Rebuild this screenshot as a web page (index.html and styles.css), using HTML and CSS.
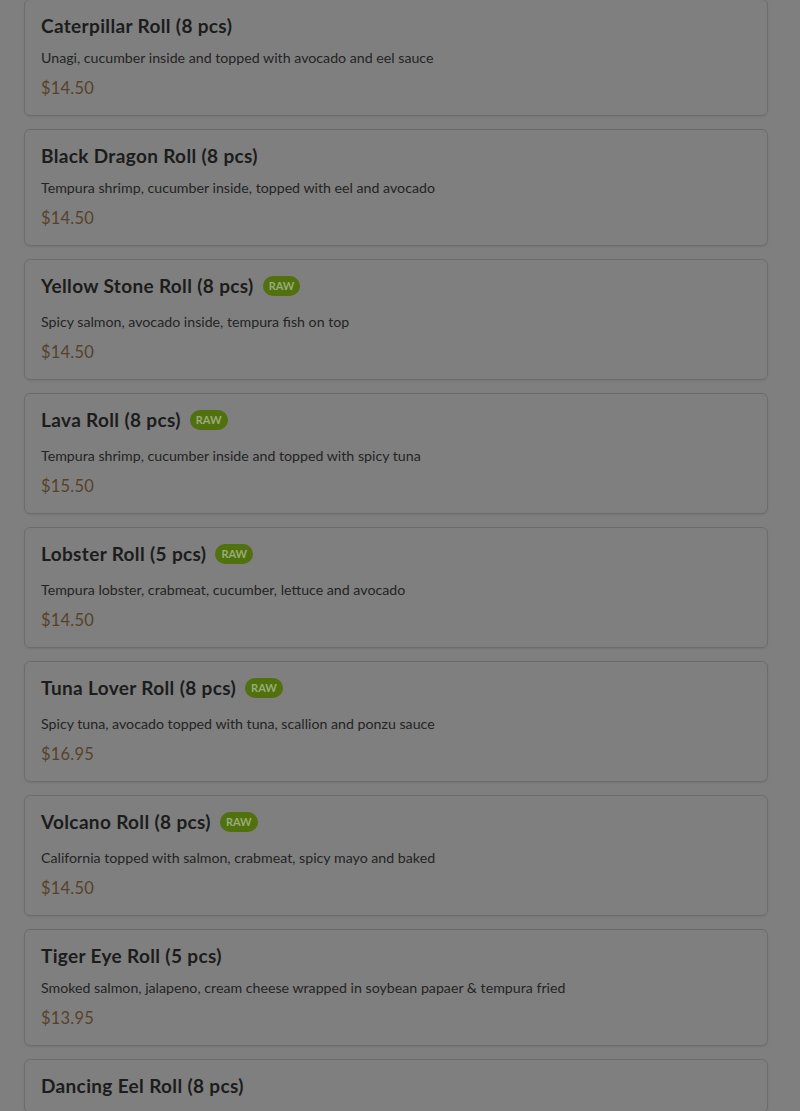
FILE: index.html
```html
<!DOCTYPE html>
<html>
<head>
<meta charset="utf-8">
<link rel="stylesheet" href="styles.css">
</head>
<body>
<div class="menu">
  <div class="card">
    <div class="title-row"><h3 class="title">Caterpillar Roll (8 pcs)</h3></div>
    <p class="desc">Unagi, cucumber inside and topped with avocado and eel sauce</p>
    <div class="price">$14.50</div>
  </div>
  <div class="card">
    <div class="title-row"><h3 class="title">Black Dragon Roll (8 pcs)</h3></div>
    <p class="desc">Tempura shrimp, cucumber inside, topped with eel and avocado</p>
    <div class="price">$14.50</div>
  </div>
  <div class="card">
    <div class="title-row badged"><h3 class="title">Yellow Stone Roll (8 pcs)</h3><span class="badge">RAW</span></div>
    <p class="desc">Spicy salmon, avocado inside, tempura fish on top</p>
    <div class="price">$14.50</div>
  </div>
  <div class="card">
    <div class="title-row badged"><h3 class="title">Lava Roll (8 pcs)</h3><span class="badge">RAW</span></div>
    <p class="desc">Tempura shrimp, cucumber inside and topped with spicy tuna</p>
    <div class="price">$15.50</div>
  </div>
  <div class="card">
    <div class="title-row badged"><h3 class="title">Lobster Roll (5 pcs)</h3><span class="badge">RAW</span></div>
    <p class="desc">Tempura lobster, crabmeat, cucumber, lettuce and avocado</p>
    <div class="price">$14.50</div>
  </div>
  <div class="card">
    <div class="title-row badged"><h3 class="title">Tuna Lover Roll (8 pcs)</h3><span class="badge">RAW</span></div>
    <p class="desc">Spicy tuna, avocado topped with tuna, scallion and ponzu sauce</p>
    <div class="price">$16.95</div>
  </div>
  <div class="card">
    <div class="title-row badged"><h3 class="title">Volcano Roll (8 pcs)</h3><span class="badge">RAW</span></div>
    <p class="desc">California topped with salmon, crabmeat, spicy mayo and baked</p>
    <div class="price">$14.50</div>
  </div>
  <div class="card">
    <div class="title-row"><h3 class="title">Tiger Eye Roll (5 pcs)</h3></div>
    <p class="desc">Smoked salmon, jalapeno, cream cheese wrapped in soybean papaer &amp; tempura fried</p>
    <div class="price">$13.95</div>
  </div>
  <div class="card">
    <div class="title-row"><h3 class="title">Dancing Eel Roll (8 pcs)</h3></div>
  </div>
</div>
</body>
</html>
```
FILE: styles.css
```css
html, body {
  margin: 0;
  padding: 0;
  background: #7f7f7f;
  overflow: hidden;
}
body {
  font-family: "Lato", "Open Sans", sans-serif;
  color: #1e1e1e;
}
.menu {
  display: flex;
  flex-direction: column;
  gap: 13px;
  padding: 0 32px 0 24px;
  margin-top: -1px;
}
.card {
  border: 1px solid #6c6c6c;
  border-radius: 6px;
  padding: 16px;
  box-shadow: 0 1px 2px rgba(0,0,0,0.08);
}
.title-row {
  display: flex;
  align-items: center;
  gap: 9px;
  height: 20px;
}
.title-row.badged {
  height: 20px;
  padding-bottom: 4px;
}
.title {
  margin: 0;
  font-size: 19px;
  font-weight: 700;
  line-height: 20px;
  letter-spacing: 0.35px;
  color: #1c1c1c;
}
.badge {
  background: #51700e;
  color: #98ac78;
  font-size: 11px;
  font-weight: 700;
  line-height: 14px;
  padding: 3px 6px;
  border-radius: 10px;
}
.desc {
  margin: 12px 0 0;
  font-size: 14.2px;
  line-height: 20px;
  color: #242424;
}
.price {
  margin-top: 9px;
  font-size: 16.5px;
  line-height: 22px;
  letter-spacing: 0.2px;
  color: #574229;
}
```
